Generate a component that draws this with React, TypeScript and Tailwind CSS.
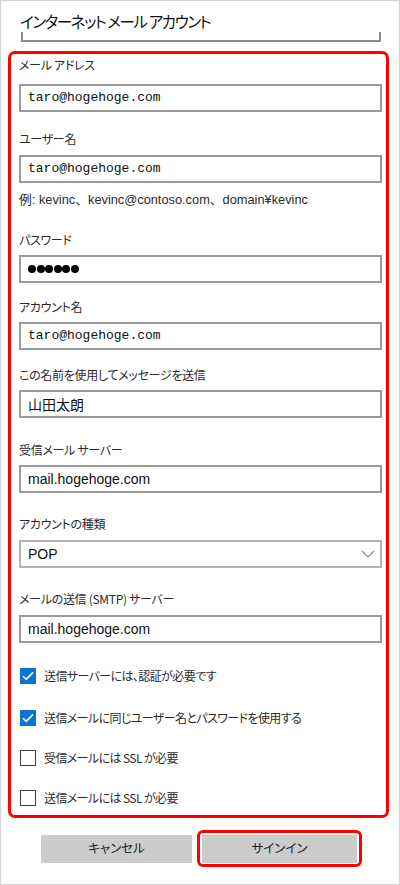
import React from "react";

const JP = "font-['Noto_Sans_CJK_JP','Liberation_Sans',sans-serif] [font-feature-settings:'palt']";

function Label({ text, mt }: { text: string; mt: string }) {
  return (
    <div className={`${mt} h-[18px] leading-[18px] text-[12px] tracking-[-0.3px] text-[#2b2b2b] ${JP}`}>
      {text}
    </div>
  );
}

function Field({
  value,
  mt,
  kind = "mono",
}: {
  value: React.ReactNode;
  mt: string;
  kind?: "mono" | "sans" | "jp" | "dots";
}) {
  const font =
    kind === "mono"
      ? "font-['Liberation_Mono',monospace] text-[13px]"
      : kind === "sans"
        ? "font-['Liberation_Sans','Noto_Sans_CJK_JP',sans-serif] text-[14px]"
        : `${JP} text-[14px]`;
  return (
    <div
      className={`${mt} w-[363px] h-[28px] border-2 border-[#9a9a9a] bg-white pl-[7px] flex items-center text-[#111] ${font}`}
    >
      {kind === "dots" ? (
        <div className="flex gap-[0.5px]">
          {[0, 1, 2, 3, 4, 5].map((i) => (
            <span key={i} className="w-[8px] h-[8px] rounded-full bg-black" />
          ))}
        </div>
      ) : (
        value
      )}
    </div>
  );
}

function Check({ text, checked, mt }: { text: string; checked: boolean; mt: string }) {
  return (
    <div className={`${mt} h-[18px] flex items-center`}>
      <div className="ml-[1px] w-[16px] h-[16px] flex items-center justify-center">
        {checked ? (
          <div className="w-[16px] h-[16px] bg-[#0a74d2] flex items-center justify-center">
            <svg width="12" height="10" viewBox="0 0 12 10" fill="none">
              <path d="M1 5.2 L4.3 8.4 L11 1.4" stroke="#fff" strokeWidth="1.6" />
            </svg>
          </div>
        ) : (
          <div className="w-[16px] h-[16px] border-[1.5px] border-[#3a3a3a] bg-white" />
        )}
      </div>
      <span className={`ml-[8px] text-[12px] tracking-[-0.6px] leading-[18px] text-[#2b2b2b] ${JP}`}>{text}</span>
    </div>
  );
}

export default function App() {
  return (
    <div className="w-[400px] h-[885px] border border-[#d2d2d2] bg-white overflow-hidden">
      <div className="pt-[9px] pl-[19px]">
        <div className={`h-[22px] leading-[22px] text-[15.5px] tracking-[-1.4px] text-[#111] ${JP}`}>
          インターネット メール アカウント
        </div>
        <div className="ml-[1px] w-[360px] h-[10px] border-x-2 border-b-2 border-[#8c8c8c]" />
      </div>

      <div className="mt-[9px] ml-[7px] w-[381px] border-[3px] border-[#ff0000] rounded-[7px] pl-[8px] pb-[8px]">
        <Label text="メール アドレス" mt="mt-[2px]" />
        <Field value="taro@hogehoge.com" mt="mt-[10px]" />

        <Label text="ユーザー名" mt="mt-[18px]" />
        <Field value="taro@hogehoge.com" mt="mt-[7px]" />
        <div className="mt-[8px] h-[18px] leading-[18px] text-[12.8px] text-[#2b2b2b] font-['Liberation_Sans','Noto_Sans_CJK_JP',sans-serif]">
          例: kevinc、kevinc@contoso.com、domain¥kevinc
        </div>

        <Label text="パスワード" mt="mt-[22px]" />
        <Field value="" kind="dots" mt="mt-[6px]" />

        <Label text="アカウント名" mt="mt-[15px]" />
        <Field value="taro@hogehoge.com" mt="mt-[6px]" />

        <Label text="この名前を使用してメッセージを送信" mt="mt-[16px]" />
        <Field value="山田太朗" kind="jp" mt="mt-[6px]" />

        <Label text="受信メール サーバー" mt="mt-[23px]" />
        <Field value="mail.hogehoge.com" kind="sans" mt="mt-[6px]" />

        <Label text="アカウントの種類" mt="mt-[22px]" />
        <div className="mt-[7px] w-[363px] h-[28px] border-2 border-[#b4b4b4] bg-white pl-[7px] pr-[5px] flex items-center justify-between font-['Liberation_Sans',sans-serif] text-[14px] text-[#111]">
          <span>POP</span>
          <svg width="14" height="8" viewBox="0 0 14 8" fill="none">
            <path d="M1 1 L7 7 L13 1" stroke="#8a8a8a" strokeWidth="1.2" />
          </svg>
        </div>

        <Label text="メールの送信 (SMTP) サーバー" mt="mt-[22px]" />
        <Field value="mail.hogehoge.com" kind="sans" mt="mt-[7px]" />

        <Check text="送信サーバーには、認証が必要です" checked mt="mt-[24px]" />
        <Check text="送信メールに同じユーザー名とパスワードを使用する" checked mt="mt-[24px]" />
        <Check text="受信メールには SSL が必要" checked={false} mt="mt-[22px]" />
        <Check text="送信メールには SSL が必要" checked={false} mt="mt-[22px]" />
      </div>

      <div className="mt-[12px] pl-[40px] flex items-center">
        <button className={`w-[151px] h-[28px] bg-[#cccccc] text-[12.5px] text-[#222] ${JP}`}>
          キャンセル
        </button>
        <div className="ml-[5px] w-[165px] h-[37px] border-[3px] border-[#ff0000] rounded-[6px] flex items-center justify-center">
          <button className={`w-[155px] h-[28px] bg-[#cccccc] text-[12.5px] text-[#222] ${JP}`}>
            サインイン
          </button>
        </div>
      </div>
    </div>
  );
}
